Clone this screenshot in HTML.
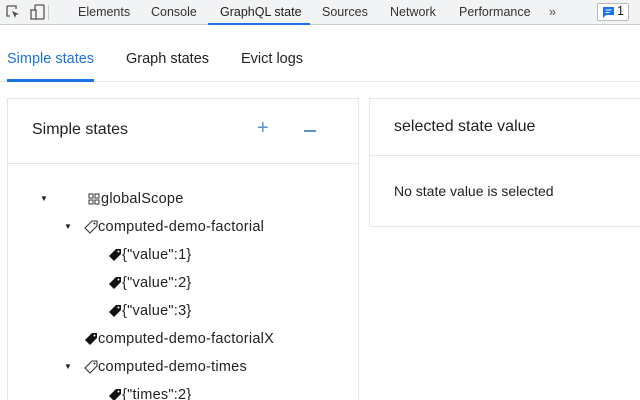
<!DOCTYPE html>
<html><head><style>
*{margin:0;padding:0;box-sizing:border-box}
html,body{width:640px;height:400px;overflow:hidden}
body{background:#fff;font-family:"Liberation Sans",sans-serif;color:#202124;position:relative}
.bar{position:absolute;left:0;top:0;width:640px;height:25px;background:#f1f3f4;border-bottom:1px solid #cbcdd1}
.bar span{position:absolute;top:5px;font-size:12.5px;color:#333}
.abs{position:absolute}
.t{position:absolute;font-size:14px;white-space:nowrap;color:#222}
.tr{font-size:14.5px;letter-spacing:0.25px}
.tri{position:absolute;font-size:8px;color:#222}
</style></head><body>
<div class="bar">
<svg class="abs" style="left:5px;top:4px" width="16" height="16" viewBox="0 0 16 16"><path d="M2 2h9v3M2 2v10h3" fill="none" stroke="#555" stroke-width="1.3"/><path d="M7 7l7 3-3 1-1 3z" fill="#555"/></svg>
<svg class="abs" style="left:29px;top:3px" width="18" height="18" viewBox="0 0 18 18"><rect x="6" y="2" width="9" height="14" rx="1" fill="none" stroke="#555" stroke-width="1.3"/><rect x="2" y="7" width="5" height="9" fill="#f1f3f4" stroke="#555" stroke-width="1.3"/></svg>
<div class="abs" style="left:48px;top:5px;width:1px;height:15px;background:#ccc"></div>
<span style="left:78px">Elements</span>
<span style="left:151px">Console</span>
<span style="left:220px;color:#1f1f1f">GraphQL state</span>
<div class="abs" style="left:208px;top:23px;width:102px;height:2px;background:#1a73e8"></div>
<span style="left:322px">Sources</span>
<span style="left:390px">Network</span>
<span style="left:459px">Performance</span>
<span style="left:549px;color:#555">»</span>
<div class="abs" style="left:597px;top:3px;width:32px;height:18px;border:1px solid #bbb;border-radius:2px;background:#fff"></div>
<svg class="abs" style="left:603px;top:7px" width="11" height="11" viewBox="0 0 11 11"><path d="M0 0h11v8H3L0 11z" fill="#1a73e8"/><path d="M2.5 3h6M2.5 5.5h4" stroke="#fff" stroke-width="1"/></svg>
<span style="left:617px;top:4px;color:#222">1</span>
</div>
<div class="t" style="left:7px;top:51px;font-size:14.5px;color:#1a73e8">Simple states</div>
<div class="t" style="left:126px;top:51px;font-size:14.5px">Graph states</div>
<div class="t" style="left:241px;top:51px;font-size:14.5px">Evict logs</div>
<div class="abs" style="left:0;top:81px;width:640px;height:1px;background:#e8e8e8"></div>
<div class="abs" style="left:7px;top:79px;width:87px;height:3px;background:#1a73e8"></div>

<div class="abs" style="left:7px;top:98px;width:352px;height:320px;border:1px solid #e6e6e6"></div>
<div class="abs" style="left:7px;top:163px;width:352px;height:1px;background:#e6e6e6"></div>
<div class="t" style="left:32px;top:121px;font-size:16px">Simple states</div>
<div class="t" style="left:257px;top:117px;font-size:20px;color:#5b8fc9;font-weight:300">+</div>
<div class="abs" style="left:304px;top:130px;width:12px;height:1.5px;background:#5b8fc9"></div>

<div class="abs" style="left:369px;top:98px;width:280px;height:129px;border:1px solid #e6e6e6"></div>
<div class="abs" style="left:369px;top:155px;width:280px;height:1px;background:#e6e6e6"></div>
<div class="t" style="left:394px;top:118px;font-size:16px">selected state value</div>
<div class="t" style="left:394px;top:183px">No state value is selected</div>

<div class="tri" style="left:40px;top:194px">▼</div>
<svg class="abs" style="left:88px;top:193px" width="12" height="12" viewBox="0 0 12 12"><g fill="none" stroke="#333" stroke-width="1"><rect x="1" y="1" width="4" height="4"/><rect x="7" y="1" width="4" height="4"/><rect x="1" y="7" width="4" height="4"/><rect x="7" y="7" width="4" height="4"/></g></svg>
<div class="t tr" style="left:101px;top:191px">globalScope</div>

<div class="tri" style="left:64px;top:222px">▼</div>
<svg class="abs" style="left:84px;top:220px" width="14" height="14" viewBox="0 0 14 14"><path d="M8 1h5v5L6 13 1 8z" fill="none" stroke="#333" stroke-width="1.1"/><circle cx="10.5" cy="3.5" r="1" fill="#333"/></svg>
<div class="t tr" style="left:98px;top:219px">computed-demo-factorial</div>

<svg class="abs" style="left:108px;top:248px" width="14" height="14" viewBox="0 0 14 14"><path d="M8 1h5v5L6 13 1 8z" fill="#111"/><circle cx="10.5" cy="3.5" r="1" fill="#fff"/></svg>
<div class="t tr" style="left:122px;top:247px">{"value":1}</div>
<svg class="abs" style="left:108px;top:276px" width="14" height="14" viewBox="0 0 14 14"><path d="M8 1h5v5L6 13 1 8z" fill="#111"/><circle cx="10.5" cy="3.5" r="1" fill="#fff"/></svg>
<div class="t tr" style="left:122px;top:275px">{"value":2}</div>
<svg class="abs" style="left:108px;top:304px" width="14" height="14" viewBox="0 0 14 14"><path d="M8 1h5v5L6 13 1 8z" fill="#111"/><circle cx="10.5" cy="3.5" r="1" fill="#fff"/></svg>
<div class="t tr" style="left:122px;top:303px">{"value":3}</div>

<svg class="abs" style="left:84px;top:332px" width="14" height="14" viewBox="0 0 14 14"><path d="M8 1h5v5L6 13 1 8z" fill="#111"/><circle cx="10.5" cy="3.5" r="1" fill="#fff"/></svg>
<div class="t tr" style="left:98px;top:331px">computed-demo-factorialX</div>

<div class="tri" style="left:64px;top:362px">▼</div>
<svg class="abs" style="left:84px;top:360px" width="14" height="14" viewBox="0 0 14 14"><path d="M8 1h5v5L6 13 1 8z" fill="none" stroke="#333" stroke-width="1.1"/><circle cx="10.5" cy="3.5" r="1" fill="#333"/></svg>
<div class="t tr" style="left:98px;top:359px">computed-demo-times</div>

<svg class="abs" style="left:108px;top:388px" width="14" height="14" viewBox="0 0 14 14"><path d="M8 1h5v5L6 13 1 8z" fill="#111"/><circle cx="10.5" cy="3.5" r="1" fill="#fff"/></svg>
<div class="t tr" style="left:122px;top:387px">{"times":2}</div>
</body></html>
